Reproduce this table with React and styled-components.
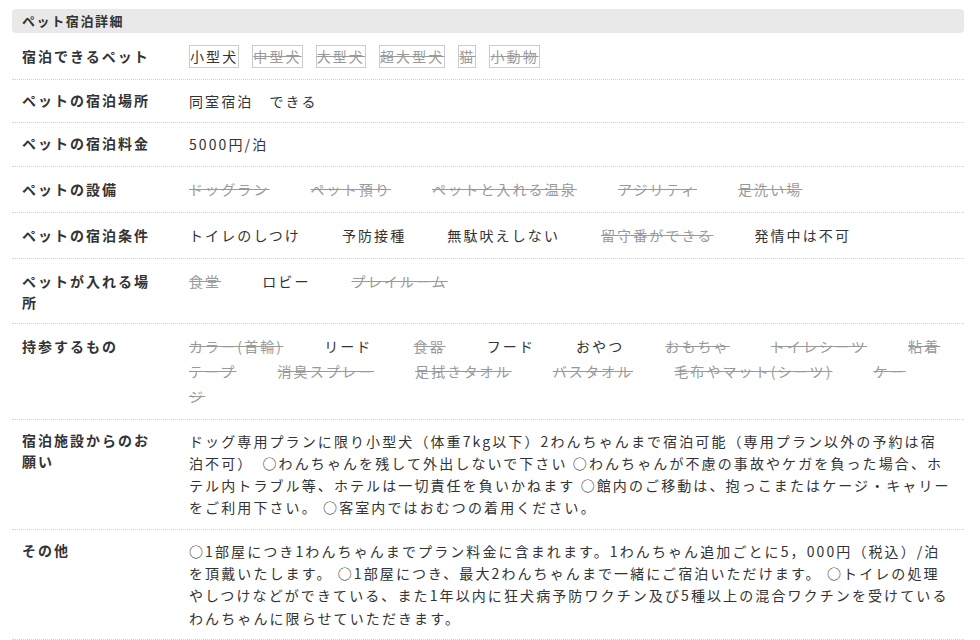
import styled, { createGlobalStyle } from "styled-components";

const GlobalStyle = createGlobalStyle`
  body {
    margin: 0;
    background: #fff;
    font-family: "Noto Sans CJK JP", "Noto Sans", sans-serif;
    color: #333;
  }
`;

// page wrapper
const Wrapper = styled.div`
  width: 952px;
  margin-left: 12px;
  padding-top: 9px;
`;

const Heading = styled.h2`
  margin: 0;
  height: 24px;
  line-height: 24px;
  padding-left: 10px;
  background: #e9e9e9;
  border-radius: 4px;
  font-size: 13px;
  font-weight: 700;
  letter-spacing: 1.6px;
  color: #333;
`;

const Row = styled.div`
  display: grid;
  grid-template-columns: 135px 1fr;
  column-gap: 32px;
  padding: 10px 12px 10px 10px;
  border-bottom: 1px dotted #cfcfcf;
`;

const Label = styled.div`
  font-size: 14px;
  font-weight: 700;
  letter-spacing: 2px;
  line-height: 21px;
  padding-top: ${(p) => p.$top || 0}px;
`;

const Value = styled.div`
  font-size: 14px;
  letter-spacing: 2.1px;
  line-height: ${(p) => (p.$list ? "25px" : "22.3px")};
  padding-top: ${(p) => p.$top || 0}px;
  word-break: break-all;
`;

// bordered pet-size tag
const Tag = styled.span`
  display: inline-block;
  border: 1px solid #ccc;
  padding: 0;
  margin-right: 13px;
  line-height: 21px;
  color: ${(p) => (p.$off ? "#999" : "#333")};
  text-decoration: ${(p) => (p.$off ? "line-through" : "none")};
`;

// inline list item
const Item = styled.span`
  margin-right: 41px;
  color: ${(p) => (p.$off ? "#999" : "#333")};
  text-decoration: ${(p) => (p.$off ? "line-through" : "none")};
`;

const pets = [
  ["小型犬", false],
  ["中型犬", true],
  ["大型犬", true],
  ["超大型犬", true],
  ["猫", true],
  ["小動物", true],
];

const lists = [
  {
    label: "ペットの設備",
    items: [
      ["ドッグラン", true],
      ["ペット預り", true],
      ["ペットと入れる温泉", true],
      ["アジリティ", true],
      ["足洗い場", true],
    ],
  },
  {
    label: "ペットの宿泊条件",
    items: [
      ["トイレのしつけ", false],
      ["予防接種", false],
      ["無駄吠えしない", false],
      ["留守番ができる", true],
      ["発情中は不可", false],
    ],
  },
  {
    label: "ペットが入れる場所",
    items: [
      ["食堂", true],
      ["ロビー", false],
      ["プレイルーム", true],
    ],
  },
  {
    label: "持参するもの",
    items: [
      ["カラー(首輪)", true],
      ["リード", false],
      ["食器", true],
      ["フード", false],
      ["おやつ", false],
      ["おもちゃ", true],
      ["トイレシーツ", true],
      ["粘着テープ", true],
      ["消臭スプレー", true],
      ["足拭きタオル", true],
      ["バスタオル", true],
      ["毛布やマット(シーツ)", true],
      ["ケージ", true],
    ],
  },
];

const requestText =
  "ドッグ専用プランに限り小型犬（体重7kg以下）2わんちゃんまで宿泊可能（専用プラン以外の予約は宿泊不可）　○わんちゃんを残して外出しないで下さい ○わんちゃんが不慮の事故やケガを負った場合、ホテル内トラブル等、ホテルは一切責任を負いかねます ○館内のご移動は、抱っこまたはケージ・キャリーをご利用下さい。 ○客室内ではおむつの着用ください。";

const otherText =
  "○1部屋につき1わんちゃんまでプラン料金に含まれます。1わんちゃん追加ごとに5，000円（税込）/泊を頂戴いたします。 ○1部屋につき、最大2わんちゃんまで一緒にご宿泊いただけます。 ○トイレの処理やしつけなどができている、また1年以内に狂犬病予防ワクチン及び5種以上の混合ワクチンを受けているわんちゃんに限らせていただきます。";

export default function App() {
  return (
    <Wrapper>
      <GlobalStyle />
      <Heading>ペット宿泊詳細</Heading>
      <Row>
        <Label $top={3}>宿泊できるペット</Label>
        <Value $list $top={1}>
          {pets.map(([name, off]) => (
            <Tag key={name} $off={off}>{name}</Tag>
          ))}
        </Value>
      </Row>
      <Row>
        <Label>ペットの宿泊場所</Label>
        <Value>同室宿泊　できる</Value>
      </Row>
      <Row>
        <Label>ペットの宿泊料金</Label>
        <Value>5000円/泊</Value>
      </Row>
      {lists.map((row) => (
        <Row key={row.label}>
          <Label $top={2}>{row.label}</Label>
          <Value $list>
            {row.items.map(([name, off]) => (
              <Item key={name} $off={off}>{name}</Item>
            ))}
          </Value>
        </Row>
      ))}
      <Row>
        <Label>宿泊施設からのお願い</Label>
        <Value>{requestText}</Value>
      </Row>
      <Row>
        <Label>その他</Label>
        <Value>{otherText}</Value>
      </Row>
    </Wrapper>
  );
}
